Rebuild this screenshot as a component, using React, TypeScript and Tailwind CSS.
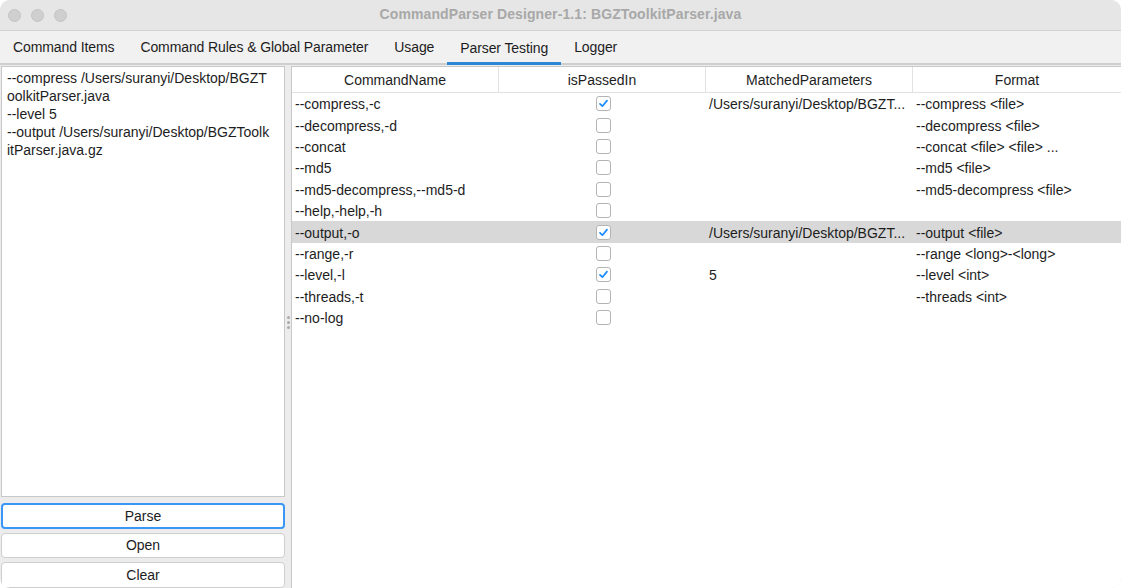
import { useState } from 'react';

type Row = {
  name: string;
  passed: boolean;
  matched: string;
  format: string;
};

const rows: Row[] = [
  { name: '--compress,-c', passed: true, matched: '/Users/suranyi/Desktop/BGZT...', format: '--compress <file>' },
  { name: '--decompress,-d', passed: false, matched: '', format: '--decompress <file>' },
  { name: '--concat', passed: false, matched: '', format: '--concat <file> <file> ...' },
  { name: '--md5', passed: false, matched: '', format: '--md5 <file>' },
  { name: '--md5-decompress,--md5-d', passed: false, matched: '', format: '--md5-decompress <file>' },
  { name: '--help,-help,-h', passed: false, matched: '', format: '' },
  { name: '--output,-o', passed: true, matched: '/Users/suranyi/Desktop/BGZT...', format: '--output <file>' },
  { name: '--range,-r', passed: false, matched: '', format: '--range <long>-<long>' },
  { name: '--level,-l', passed: true, matched: '5', format: '--level <int>' },
  { name: '--threads,-t', passed: false, matched: '', format: '--threads <int>' },
  { name: '--no-log', passed: false, matched: '', format: '' },
];

const tabs = ['Command Items', 'Command Rules & Global Parameter', 'Usage', 'Parser Testing', 'Logger'];

function Checkbox({ checked }: { checked: boolean }) {
  return (
    <div className="w-[15px] h-[15px] rounded-[3px] border border-[#b4b4b4] bg-white flex items-center justify-center">
      {checked && (
        <svg width="11" height="11" viewBox="0 0 11 11" fill="none">
          <path d="M2 5.8 L4.4 8.2 L9 2.6" stroke="#1a8cff" strokeWidth="1.7" strokeLinecap="round" strokeLinejoin="round" />
        </svg>
      )}
    </div>
  );
}

export default function App() {
  const [selected] = useState(6);

  return (
    <div
      className="w-[1121px] h-[588px] overflow-hidden bg-[#ececec] rounded-[10px] text-[14px] text-[#1d1d1d] flex flex-col"
      style={{ fontFamily: '"Liberation Sans", Arial, sans-serif' }}
    >
      {/* title bar */}
      <div className="h-[31px] shrink-0 bg-[#e6e6e6] border-b border-[#d2d2d2] flex items-center relative">
        <div className="flex items-center gap-[10px] pl-[8px]">
          <span className="w-[13px] h-[13px] rounded-full bg-[#cfcfcf] border border-[#c2c2c2]" />
          <span className="w-[13px] h-[13px] rounded-full bg-[#cfcfcf] border border-[#c2c2c2]" />
          <span className="w-[13px] h-[13px] rounded-full bg-[#cfcfcf] border border-[#c2c2c2]" />
        </div>
        <div className="absolute inset-0 flex items-center justify-center font-bold text-[#a8a8a8] text-[14px] pb-[1px] tracking-[0.1px]">
          CommandParser Designer-1.1: BGZToolkitParser.java
        </div>
      </div>

      {/* tabs */}
      <div className="h-[34px] shrink-0 bg-[#f1f1f1] border-b-2 border-[#cfcfcf] flex items-stretch tracking-[-0.1px]">
        {tabs.map((t) => (
          <div
            key={t}
            className={
              t === 'Parser Testing'
                ? 'px-[13px] flex items-center border-b-[3px] border-[#2b86d6] -mb-[2px] pt-[4px]'
                : 'px-[13px] flex items-center pt-[1px]'
            }
          >
            {t}
          </div>
        ))}
      </div>

      {/* content */}
      <div className="flex-1 flex min-h-0">
        <div className="w-[286px] shrink-0 flex flex-col px-[1px] pt-[1px]">
          <div className="h-[431px] bg-white border border-[#c8c8c8] pl-[5px] pr-[14px] pt-[2px] leading-[18px] break-all">
            <div>--compress /Users/suranyi/Desktop/BGZToolkitParser.java</div>
            <div>--level 5</div>
            <div>--output /Users/suranyi/Desktop/BGZToolkitParser.java.gz</div>
          </div>
          <div className="flex flex-col gap-[4px] mt-[6px]">
            <button className="h-[26px] rounded-[4px] bg-white border-2 border-[#3a97f5] text-center">Parse</button>
            <button className="h-[25px] rounded-[4px] bg-white border border-[#cfcfcf] text-center">Open</button>
            <button className="h-[26px] rounded-[4px] bg-white border border-[#cfcfcf] text-center">Clear</button>
          </div>
        </div>

        {/* splitter */}
        <div className="w-[5px] shrink-0 flex items-center justify-center">
          <div className="flex flex-col gap-[2px] -mt-[8px]">
            <span className="w-[3px] h-[3px] rounded-full bg-[#a9a9a9]" />
            <span className="w-[3px] h-[3px] rounded-full bg-[#a9a9a9]" />
            <span className="w-[3px] h-[3px] rounded-full bg-[#a9a9a9]" />
          </div>
        </div>

        {/* table */}
        <div className="flex-1 bg-white border-l border-t border-[#c8c8c8] mt-[1px]">
          <div className="grid grid-cols-[207px_207px_207px_1fr] h-[26px] border-b border-[#e2e2e2]">
            {['CommandName', 'isPassedIn', 'MatchedParameters', 'Format'].map((h, i) => (
              <div
                key={h}
                className={
                  i < 3
                    ? 'flex items-center justify-center border-r border-[#e2e2e2] pt-[1px]'
                    : 'flex items-center justify-center pt-[1px]'
                }
              >
                {h}
              </div>
            ))}
          </div>
          {rows.map((r, i) => (
            <div
              key={r.name}
              className={
                i === selected
                  ? 'grid grid-cols-[207px_207px_207px_1fr] h-[21.4px] items-center bg-[#d8d8d8]'
                  : 'grid grid-cols-[207px_207px_207px_1fr] h-[21.4px] items-center'
              }
            >
              <div className="pl-[3px] pt-[2px] whitespace-nowrap overflow-hidden">{r.name}</div>
              <div className="flex justify-center pl-[2px]">
                <Checkbox checked={r.passed} />
              </div>
              <div className="pl-[3px] pt-[2px] whitespace-nowrap overflow-hidden">{r.matched}</div>
              <div className="pl-[3px] pt-[2px] whitespace-nowrap overflow-hidden">{r.format}</div>
            </div>
          ))}
        </div>
      </div>
    </div>
  );
}
